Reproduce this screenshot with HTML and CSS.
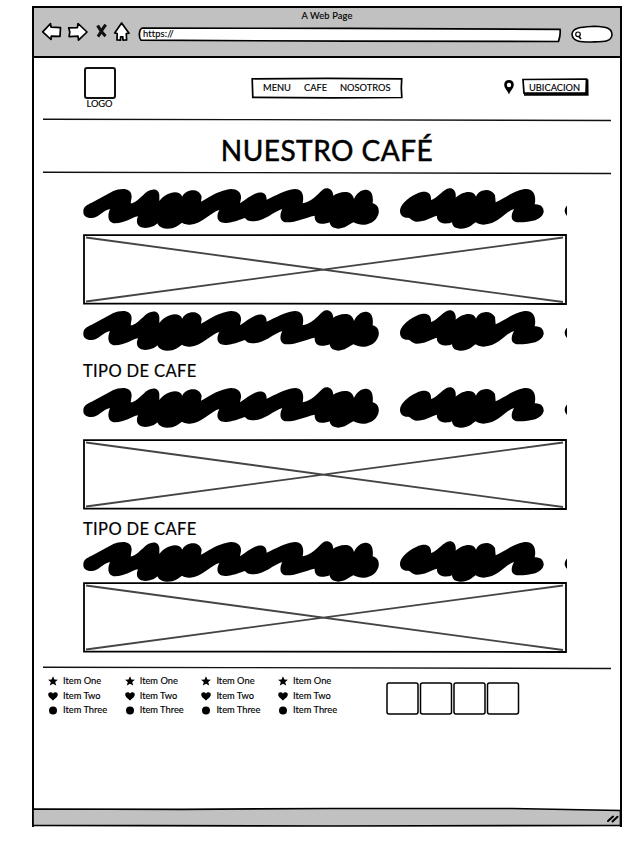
FILE: index.html
```html
<!DOCTYPE html>
<html lang="es">
<head>
<meta charset="utf-8">
<title>A Web Page</title>
<link rel="stylesheet" href="styles.css">
</head>
<body>
<svg class="defs" width="0" height="0" aria-hidden="true">
  <symbol id="scribble" viewBox="9 9 1452 126" preserveAspectRatio="none">
    <path d="M10 80C10 65 20 60 35 53L100 18C120 10 155 5 155 35L152 55C165 55 175 42 190 30C205 12 235 5 238 30L238 48C255 25 295 10 307 35C315 15 355 5 365 35L363 50C385 38 410 20 440 14C465 8 485 18 483 40L480 55C495 45 510 32 525 26C545 18 560 22 560 44C585 33 615 15 645 12C670 12 672 35 668 55C695 50 710 30 728 14C740 5 758 10 760 32C775 22 815 10 822 42C830 25 845 12 862 15C878 18 880 38 878 55C900 60 900 85 890 98C880 115 850 128 820 112C805 120 795 130 775 131C755 130 750 120 749 112C730 120 702 120 704 92C675 98 650 112 620 112C595 110 600 85 607 72C580 80 555 108 520 109C505 109 500 105 495 99C480 103 470 110 440 114C415 116 405 100 418 75C395 80 365 118 330 119C318 119 308 115 306 113C295 120 285 131 262 131C240 131 235 120 232 115C220 130 175 138 171 112C170 105 172 100 174 94C155 97 135 115 105 115C82 113 82 90 90 72C70 75 55 100 33 99C18 98 10 92 10 80Z"/>
    <path transform="translate(930 0)" d="M30 78C30 60 50 40 80 26C105 15 125 20 123 45C140 40 155 20 170 12C185 5 200 15 197 38C215 20 250 12 258 35C265 15 300 5 315 30L317 52C340 42 370 18 400 13C430 8 440 30 434 58C455 57 462 70 461 82C455 105 425 112 385 112C360 110 362 90 372 72C345 80 325 118 280 119C268 119 262 115 257 112C245 120 235 132 210 131C190 130 187 120 186 112C170 120 138 115 141 92C120 98 105 110 80 110C65 108 60 98 55 98C42 100 30 92 30 78Z"/>
    <ellipse cx="1470" cy="77" rx="16" ry="18"/>
  </symbol>
  <symbol id="cross" viewBox="0 0 484 71">
    <path d="M1 1.2L483 1V70L1 69.5Z" fill="#fff" stroke="#000" stroke-width="1.8"/>
    <path d="M3 3.5L480 68M3 67.5L480 3.5" fill="none" stroke="#444" stroke-width="1.8"/>
  </symbol>
  <symbol id="rule" viewBox="0 0 568 4">
    <path d="M0 1.2L190 1.6L568 2.5" fill="none" stroke="#111" stroke-width="1.4"/>
  </symbol>
  <symbol id="star" viewBox="0 0 10 10"><path d="M5 .2L6.4 3.4L9.9 3.7L7.2 6L8.2 9.6L5 7.8L1.8 9.6L2.8 6L.1 3.7L3.6 3.4Z"/></symbol>
  <symbol id="heart" viewBox="0 0 10 10"><path d="M5 9.5C3.5 7.9.2 6.2 .2 3.5C.2.8 3.8.4 5 2.7C6.2.4 9.8.8 9.8 3.5C9.8 6.2 6.5 7.9 5 9.5Z"/></symbol>
  <symbol id="dot" viewBox="0 0 10 10"><circle cx="5" cy="5.5" r="4"/></symbol>
</svg>

<div class="window">
  <div class="chrome">
    <div class="caption">A Web Page</div>
    <div class="toolbar">
      <svg class="nav-icons" width="92" height="22" viewBox="40 21 92 22">
        <g fill="#fff" stroke="#000" stroke-width="1.7" stroke-linejoin="round">
          <path d="M42.7 31.8L50.5 23.7L51 27.2L60.5 27.7L60 36.4L51.3 36.2L51 39.5Z"/>
          <path d="M68.7 27.8L77.4 27.6L78 23.5L87 32L78.5 40.2L78 36.2L69.1 36.6L69.8 32Z"/>
          <path d="M121.6 23L129 33.2L126.3 33.5L126.6 40L123 40.2L122.8 36.8L120.6 36.8L120.5 40.2L117 40L117.2 33.5L114.7 33Z"/>
        </g>
        <path d="M97.6 25.5C99.5 29 102 33 105.6 36.2M105.8 24.8C103 28 101 32 98 36.6" fill="none" stroke="#111" stroke-width="3.1"/>
      </svg>
      <div class="address">
        <svg class="shape" viewBox="0 0 424 16"><path d="M4 1.2L210 1.3L422 2.4C422.6 6 422 10 420.5 14.5L210 14.2L3 13.2C.5 11 1 2 4 1.2Z"/></svg>
        <span>https://</span>
      </div>
      <svg class="search" width="42" height="18" viewBox="571 25 42 18">
        <path d="M572 34C573 27 583 27 594 26.3C607 27 612 28 612 35C611 42 604 41.5 591 42C581 42 572.5 42 572 34Z" fill="#fff" stroke="#000" stroke-width="1.6"/>
        <circle cx="578" cy="34.3" r="2.3" fill="none" stroke="#000" stroke-width="1.2"/><path d="M578.6 36.3L581 39" stroke="#000" stroke-width="1.7"/>
      </svg>
    </div>
  </div>

  <main class="page">
    <header class="header">
      <div class="logo"><div class="square"></div><span>LOGO</span></div>
      <nav class="menu">
        <svg class="shape" viewBox="0 0 152 22"><path d="M1.2 1.8L76 1.3L150.7 1.8L150.3 11L150.8 20.5L80 20.8L1.8 20.3Z"/></svg>
        <a>MENU</a><a class="cafe">CAFE</a><a class="about">NOSOTROS</a>
      </nav>
      <div class="location">
        <svg width="10" height="15" viewBox="0 0 10 15"><path fill-rule="evenodd" d="M5 0C2 0 .2 2 .2 4.7C.2 8.5 3.5 10 5 14.6C6.5 10 9.8 8.5 9.8 4.7C9.8 2 8 0 5 0ZM5 2.8A2.2 2.2 0 1 1 5 7.2A2.2 2.2 0 1 1 5 2.8Z"/></svg>
        <div class="button">
          <svg class="shape" viewBox="0 0 67 18"><path d="M66.4 1.2L66.6 17.8H2L2 15H64V1.2Z" fill="#000" stroke="none"/><path d="M1 1.5L64.5 1L64 15L2 15.2Z"/></svg>
          <span>UBICACION</span>
        </div>
      </div>
    </header>
    <svg class="rule"><use href="#rule"/></svg>
    <h1>NUESTRO CAFÉ</h1>
    <svg class="rule"><use href="#rule"/></svg>

    <section class="content">
      <svg class="scribble"><use href="#scribble"/></svg>
      <svg class="image first"><use href="#cross"/></svg>
      <svg class="scribble"><use href="#scribble"/></svg>
      <h2>TIPO DE CAFE</h2>
      <svg class="scribble"><use href="#scribble"/></svg>
      <svg class="image second"><use href="#cross"/></svg>
      <h2 class="tight">TIPO DE CAFE</h2>
      <svg class="scribble"><use href="#scribble"/></svg>
      <svg class="image third"><use href="#cross"/></svg>
    </section>

    <svg class="rule last"><use href="#rule"/></svg>
    <footer class="footer">
      <ul>
        <li><svg><use href="#star"/></svg><span>Item One</span></li>
        <li><svg><use href="#heart"/></svg><span>Item Two</span></li>
        <li><svg><use href="#dot"/></svg><span>Item Three</span></li>
      </ul>
      <ul>
        <li><svg><use href="#star"/></svg><span>Item One</span></li>
        <li><svg><use href="#heart"/></svg><span>Item Two</span></li>
        <li><svg><use href="#dot"/></svg><span>Item Three</span></li>
      </ul>
      <ul>
        <li><svg><use href="#star"/></svg><span>Item One</span></li>
        <li><svg><use href="#heart"/></svg><span>Item Two</span></li>
        <li><svg><use href="#dot"/></svg><span>Item Three</span></li>
      </ul>
      <ul>
        <li><svg><use href="#star"/></svg><span>Item One</span></li>
        <li><svg><use href="#heart"/></svg><span>Item Two</span></li>
        <li><svg><use href="#dot"/></svg><span>Item Three</span></li>
      </ul>
      <svg class="social" width="134" height="33" viewBox="0 0 134 33" fill="#fff" stroke="#000" stroke-width="1.5">
        <rect x="1" y="1" width="31" height="31" rx="2"/>
        <rect x="34.5" y="1" width="31" height="31" rx="2"/>
        <rect x="68" y="1" width="31" height="31" rx="2"/>
        <rect x="101.5" y="1" width="31" height="31" rx="2"/>
      </svg>
    </footer>
  </main>

  <svg class="status" width="590" height="20" viewBox="0 0 590 20">
    <path d="M1 2L150 2.3L300 1.5L480 1.5L588.5 3.5V18.5L300 19L1 18.3Z" fill="#c1c1c1" stroke="#000" stroke-width="1.7"/>
    <path d="M576 14L581 9.5M580.5 14.5L585.5 9.8" stroke="#000" stroke-width="2" stroke-linecap="round"/>
  </svg>
</div>
</body>
</html>
```
FILE: styles.css
```css
* { box-sizing: border-box; }

body {
  margin: 0;
  padding: 6px 0 0 32px;
  background: #fff;
  color: #000;
  font: 9.3px/12px Lato, "Open Sans", sans-serif;
  -webkit-text-stroke: 0.15px #000;
}

svg { display: block; }
.defs { position: absolute; }

.window {
  width: 590px;
  height: 821px;
  border: solid #000;
  border-width: 2px 2px 0;
  display: flex;
  flex-direction: column;
}

.chrome {
  flex: none;
  height: 50px;
  background: #c1c1c1;
  border-bottom: 2px solid #000;
}

.caption {
  height: 12px;
  padding-top: 2px;
  text-align: center;
  letter-spacing: 0.15px;
}

.toolbar {
  display: flex;
  align-items: flex-start;
  padding: 1px 0 0 6px;
}

.shape {
  position: absolute;
  inset: 0;
  width: 100%;
  height: 100%;
  fill: #fff;
  stroke: #000;
  stroke-width: 1.7;
}

.shape + * { position: relative; }

.address {
  position: relative;
  width: 424px;
  height: 16px;
  margin: 6px 9px 0 6px;
  padding: 1px 0 0 5px;
}

.address span { letter-spacing: 0.15px; }
.search { margin-top: 4px; }

.page { flex: 1; }

.header {
  display: flex;
  height: 60px;
  padding-left: 49px;
}

.logo {
  width: 33px;
  padding-top: 9px;
  display: flex;
  flex-direction: column;
  align-items: center;
}

.logo span { margin-top: -1px; }

.square {
  flex: none;
  width: 32px;
  height: 32px;
  border: 2px solid #111;
  border-radius: 3px;
}

.menu {
  position: relative;
  display: flex;
  width: 152px;
  height: 22px;
  margin: 19px 0 0 135px;
  padding: 5px 0 0 12px;
}

.menu a { position: relative; width: 41px; white-space: nowrap; }
.menu .cafe { width: 36px; }

.location {
  display: flex;
  margin: 20px 0 0 101px;
}

.location > svg { margin-top: 2px; }

.button {
  position: relative;
  width: 67px;
  height: 18px;
  margin-left: 8px;
  padding: 4px 0 0 7px;
}

.rule {
  width: 568px;
  height: 4px;
  margin-left: 9px;
}

h1 {
  height: 49px;
  margin: 0;
  padding-top: 10px;
  font-size: 28px;
  font-weight: 400;
  line-height: 36px;
  letter-spacing: 0.5px;
  text-align: center;
  -webkit-text-stroke: 0.5px #000;
}

.content {
  width: 484px;
  height: 491px;
  margin-left: 49px;
  padding-top: 13px;
}

.scribble { width: 484px; height: 42px; }
.image { width: 484px; height: 71px; }
.image.first { margin: 4px 0 5px; }
.image.second { margin-top: 10px; }
.image.third { margin-top: -1px; }

h2 {
  height: 35px;
  margin: 0;
  padding-top: 9px;
  font-size: 16.5px;
  font-weight: 400;
  line-height: 20px;
  letter-spacing: 0.38px;
  -webkit-text-stroke: 0.2px #000;
}

.tight { height: 31px; }

.footer { display: flex; padding: 4px 0 0 14px; }

ul {
  width: 76.7px;
  margin: 0;
  padding: 0;
  list-style: none;
}

li { display: flex; height: 14.5px; align-items: center; }
li svg { width: 10px; height: 10px; margin-right: 5px; }

.social { margin: 8px 0 0 31px; }

.status { flex: none; margin-left: -2px; }
```
